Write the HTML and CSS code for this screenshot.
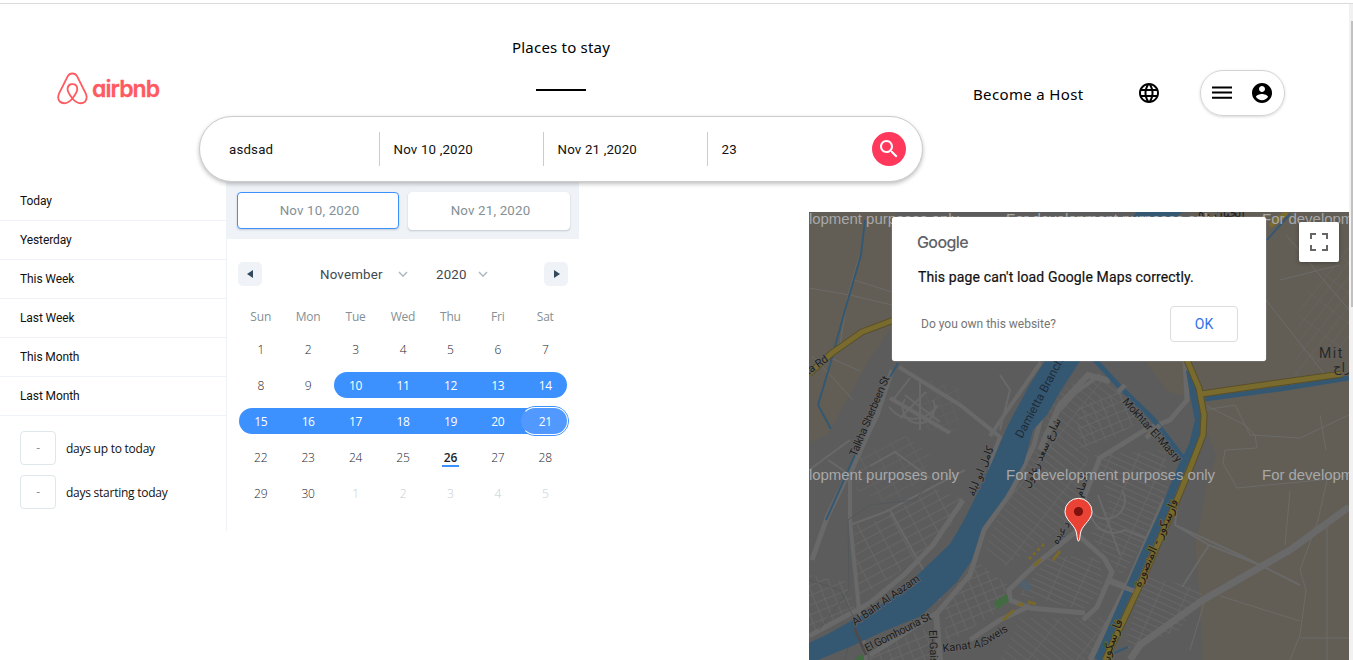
FILE: index.html
```html
<!DOCTYPE html>
<html lang="en">
<head>
<meta charset="utf-8">
<title>airbnb</title>
<link rel="stylesheet" href="styles.css">
</head>
<body>
<div class="page">
  <header class="header">
    <a class="logo">
      <svg class="belo" width="31" height="33" viewBox="0 0 32 34" fill="none" stroke="#ff5a5f" stroke-width="1.9" stroke-linejoin="round"><path d="M15.9 27.3C12.8 23.4 10.9 20.5 10.9 17.6C10.9 14.5 13 12.5 15.9 12.5S20.9 14.5 20.9 17.6C20.9 20.5 19 23.4 15.9 27.3C12.8 31 10.2 32.2 7.5 32.2C3.6 32.2 1.2 29.5 1.2 26.1C1.2 24.6 1.6 23.3 2.3 21.7L11 4.5C12.2 2.4 13.5 1.5 15.9 1.5S19.6 2.4 20.8 4.5L29.5 21.7C30.2 23.3 30.6 24.6 30.6 26.1C30.6 29.5 28.2 32.2 24.3 32.2C21.6 32.2 19 31 15.9 27.3Z"/></svg>
      <span class="wordmark">airbnb</span>
    </a>
    <div class="center">
      <div class="tab"><span class="tab-label">Places to stay</span></div>
      <div class="search">
        <div class="field place">asdsad</div>
        <div class="field date">Nov 10 ,2020</div>
        <div class="field date">Nov 21 ,2020</div>
        <div class="field guests">23</div>
        <button class="go"><svg width="24" height="24" viewBox="0 0 24 24" fill="#fff"><path d="M15.5 14h-.79l-.28-.27C15.41 12.59 16 11.11 16 9.5 16 5.91 13.09 3 9.5 3S3 5.91 3 9.5 5.91 16 9.5 16c1.61 0 3.09-.59 4.23-1.57l.27.28v.79l5 4.99L20.49 19l-4.99-5zm-6 0C7.01 14 5 11.99 5 9.5S7.01 5 9.5 5 14 7.01 14 9.5 11.99 14 9.5 14z"/></svg></button>
      </div>
    </div>
    <div class="account">
      <span class="host">Become a Host</span>
      <svg class="globe" width="24" height="24" viewBox="0 0 24 24"><path d="M11.99 2C6.47 2 2 6.48 2 12s4.47 10 9.99 10C17.52 22 22 17.52 22 12S17.52 2 11.99 2zm6.93 6h-2.95c-.32-1.25-.78-2.45-1.38-3.56 1.84.63 3.37 1.91 4.33 3.56zM12 4.04c.83 1.2 1.48 2.53 1.91 3.96h-3.82c.43-1.43 1.08-2.76 1.91-3.96zM4.26 14C4.1 13.36 4 12.69 4 12s.1-1.36.26-2h3.38c-.08.66-.14 1.32-.14 2s.06 1.34.14 2H4.26zm.82 2h2.95c.32 1.25.78 2.45 1.38 3.56-1.84-.63-3.37-1.9-4.33-3.56zm2.95-8H5.08c.96-1.66 2.49-2.93 4.33-3.56C8.81 5.55 8.35 6.75 8.03 8zM12 19.96c-.83-1.2-1.48-2.53-1.91-3.96h3.82c-.43 1.43-1.08 2.76-1.91 3.96zM14.34 14H9.66c-.09-.66-.16-1.32-.16-2s.07-1.35.16-2h4.68c.09.65.16 1.32.16 2s-.07 1.34-.16 2zm.25 5.56c.6-1.11 1.06-2.31 1.38-3.56h2.95c-.96 1.65-2.49 2.93-4.33 3.56zM16.36 14c.08-.66.14-1.32.14-2s-.06-1.34-.14-2h3.38c.16.64.26 1.31.26 2s-.1 1.36-.26 2h-3.38z"/></svg>
      <div class="menu">
        <svg width="20" height="14" viewBox="0 0 20 14"><path d="M0 .5h20v2H0zM0 5.600h20v2H0zM0 10.700h20v2H0z"/></svg>
        <svg width="24" height="24" viewBox="0 0 24 24"><path d="M12 2C6.48 2 2 6.48 2 12s4.48 10 10 10 10-4.48 10-10S17.52 2 12 2zm0 3c1.66 0 3 1.34 3 3s-1.34 3-3 3-3-1.34-3-3 1.34-3 3-3zm0 14.2c-2.5 0-4.71-1.28-6-3.22.03-1.99 4-3.08 6-3.08 1.99 0 5.97 1.09 6 3.08-1.29 1.94-3.5 3.22-6 3.22z"/></svg>
      </div>
    </div>
  </header>

  <main class="main">
    <section class="picker">
      <div class="ranges">
        <div class="range">Today</div><div class="range">Yesterday</div><div class="range">This Week</div>
        <div class="range">Last Week</div><div class="range">This Month</div><div class="range">Last Month</div>
        <div class="inputs">
          <div class="days"><span class="num">-</span><span>days up to today</span></div>
          <div class="days second"><span class="num">-</span><span>days starting today</span></div>
        </div>
      </div>
      <div class="calendar">
        <div class="display"><div class="pick active">Nov 10, 2020</div><div class="pick">Nov 21, 2020</div></div>
        <div class="months">
          <span class="arrow"><svg width="7" height="8" viewBox="0 0 7 8"><path d="M0 4L6 0v8z"/></svg></span>
          <span class="selects">
            <span class="month">November</span><svg class="chev" width="10" height="7" viewBox="0 0 10 7"><path d="M1 1l4 4.2L9 1"/></svg>
            <span class="year">2020</span><svg class="chev" width="10" height="7" viewBox="0 0 10 7"><path d="M1 1l4 4.2L9 1"/></svg>
          </span>
          <span class="arrow"><svg width="7" height="8" viewBox="0 0 7 8"><path d="M7 4L1 0v8z"/></svg></span>
        </div>
        <div class="week names"><span>Sun</span><span>Mon</span><span>Tue</span><span>Wed</span><span>Thu</span><span>Fri</span><span>Sat</span></div>
        <div class="week"><span>1</span><span>2</span><span>3</span><span>4</span><span>5</span><span>6</span><span>7</span></div>
        <div class="week"><span>8</span><span>9</span><span class="in first">10</span><span class="in">11</span><span class="in">12</span><span class="in">13</span><span class="in last">14</span></div>
        <div class="week"><span class="in first">15</span><span class="in">16</span><span class="in">17</span><span class="in">18</span><span class="in">19</span><span class="in">20</span><span class="in last end">21</span></div>
        <div class="week"><span>22</span><span>23</span><span>24</span><span>25</span><span class="today">26</span><span>27</span><span>28</span></div>
        <div class="week"><span>29</span><span>30</span><span class="off">1</span><span class="off">2</span><span class="off">3</span><span class="off">4</span><span class="off">5</span></div>
      </div>
    </section>

    <section class="map">
      <svg class="tiles" width="540" height="448" viewBox="809 212 540 448">
        <defs>
          <pattern id="blockA" width="17" height="9" patternUnits="userSpaceOnUse" patternTransform="rotate(-28)"><path d="M0 0H17M0 0V9" fill="none" stroke="#666" stroke-width="2"/></pattern>
          <pattern id="blockB" width="25" height="6" patternUnits="userSpaceOnUse" patternTransform="rotate(24)"><path d="M0 0H25M0 0V6" fill="none" stroke="#666" stroke-width="1.800"/></pattern>
          <pattern id="blockC" width="7" height="38" patternUnits="userSpaceOnUse" patternTransform="rotate(-52)"><path d="M0 0V38M0 0H7" fill="none" stroke="#666" stroke-width="1.500"/></pattern>
          <pattern id="blockD" width="10" height="9" patternUnits="userSpaceOnUse" patternTransform="rotate(-22)"><path d="M0 0H10M0 0V9" fill="none" stroke="#666" stroke-width="2"/></pattern>
          <pattern id="blockE" width="9" height="24" patternUnits="userSpaceOnUse" patternTransform="rotate(38)"><path d="M0 0V24M0 0H9" fill="none" stroke="#696969" stroke-width="1.200"/></pattern>
        </defs>
        <rect x="809" y="212" width="540" height="448" fill="#5c5c5c"/>
        <path d="M809 212H895V322L868 362L828 434L809 443ZM1190 212H1349V660H1202L1200 600L1195 545L1206 490L1216 455L1206 430L1190 370ZM1145 361H1186L1192 398L1168 392Z" fill="#625e56"/>

        <path d="M880 520L933 488L966 500L945 535L902 570L858 600L854 525Z" fill="url(#blockA)"/>
        <path d="M809 575L848 582L856 614L809 636Z" fill="url(#blockD)"/>
        <path d="M860 455L905 435L930 452L925 478L890 505L856 490Z" fill="url(#blockA)" opacity=".6"/>
        <path d="M928 380L962 388L958 432L918 430Z" fill="url(#blockD)" opacity=".4"/>
        <path d="M1050 398L1088 372L1130 385L1098 428L1060 470L1036 462Z" fill="url(#blockC)"/>
        <path d="M1030 450L1092 440L1080 500L1060 530L1002 568L984 550L1003 505Z" fill="url(#blockC)"/>
        <path d="M975 560L1008 585L1000 610L945 645L945 602Z" fill="url(#blockD)"/>
        <path d="M868 655L930 625L932 660H870Z" fill="url(#blockD)"/>
        <path d="M1095 455L1165 450L1168 490L1142 545L1122 575L1090 535L1110 505Z" fill="url(#blockB)"/>
        <path d="M1050 555L1100 558L1103 590L1083 610L1020 595Z" fill="url(#blockB)"/>
        <path d="M1000 660L1020 618L1100 618L1114 620L1095 660Z" fill="url(#blockC)"/>
        <path d="M1076 408L1120 390L1142 420L1110 440L1080 448Z" fill="url(#blockD)"/>
        <path d="M1143 575L1205 590L1180 630L1125 650Z" fill="url(#blockB)"/>
        <path d="M1300 300L1349 235V345L1295 378Z" fill="url(#blockE)" opacity=".65"/>

        <g fill="none" stroke="#696969">
          <path stroke-width="5" d="M892 370L877 415L855 460L828 515L812 560M963 500L933 545L904 575L870 603L809 636M1048 390L1034 445L1012 490L984 530L970 575L938 612L870 655"/>
          <path stroke-width="4" d="M899 367L960 405L1000 437L993 455L990 470M890 398L950 433M990 436L1013 402L1041 362M1060 410L1075 393L1100 375M870 430L850 475V520L860 620L866 660"/>
          <path stroke-width="7" d="M1349 507L1290 550L1203 600L1140 645L1130 660"/>
          <path stroke-width="5" d="M1185 361L1187 400L1170 420L1145 430L1100 458L1085 495L1078 535L1104 558L1112 572L1097 607L1083 620M1078 530L1035 565L1009 590L1010 600L1030 608L1085 613M970 640L1000 620L1030 606"/>
          <path stroke-width="6" d="M1165 500L1130 580L1090 660M936 612L940 660M1108 580L1134 590M1110 381L1088 375L1060 405L1040 450"/>
          <path stroke-width="2" d="M893 400L910 378M905 395L940 422M900 418L926 392M920 382V430M889 407A30 30 0 0 0 938 405M905 399A16 16 0 1 0 933 400M1000 375L1010 390L1000 430M870 466L895 452L930 478M850 525L885 512L965 470M890 510L940 600M828 460L850 475M809 470L850 440"/>
          <path stroke-width="2" d="M1122 490A18 18 0 1 1 1090 510A24 24 0 0 0 1125 530L1150 540M1098 495L1120 555M1178 495L1175 525L1209 545L1182 587M1175 525L1240 555L1300 585M1209 545L1260 565"/>
        </g>
        <g fill="none" stroke="#6b6b68" stroke-width="1">
          <path d="M809 288L850 295L892 305M854 280L892 292M859 257L848 295L840 345M826 356L860 371M812 356L835 380L853 400M1349 475L1320 480L1237 488L1223 463L1225 450L1257 448L1255 435L1245 425L1205 405M1290 491L1285 545M1327 480L1318 520L1300 570L1306 590L1300 635L1290 660M1327 520V660M1220 596L1300 621M1205 600L1190 650M1300 638H1349M1266 300L1325 375M1280 280L1340 265M1320 415L1326 450M1205 410L1235 405L1250 435L1300 438L1349 415M1286 235L1349 310"/>
          <path d="M819 630L849 590L848 520L870 505L915 500L930 482M845 660L855 620L840 590L809 580" stroke="#53585b"/>
        </g>

        <path fill="#355872" d="M1045 361H1080L1060 392L1047 415L1033 430L1024 463L1005 497L982 528L972 560L957 582L938 600L921 616L882 632L852 646L818 660H809V643L828 634L858 617L882 604L908 584L930 563L950 544L963 522L976 496L992 462L1008 425L1030 384ZM1137 212H1182L1172 222H1127Z"/>
        <g fill="none" stroke="#355872">
          <path stroke-width="5" d="M1095 360L1118 385L1153 419L1183 458M1205 399L1280 389L1349 378"/>
          <path stroke-width="8" d="M1190 370L1194 395L1199 420L1193 445L1181 469L1165 509L1145 553L1130 587L1098 660"/>
          <path stroke-width="2" d="M865 220L861 255L845 310L830 365L818 405L831 429M898 363L890 377M855 455L826 520M1267 240L1290 214M1114 653L1128 647"/>
        </g>
        <g fill="none" stroke="#594f2b" stroke-width="7"><path d="M809 374L832 353L862 332L894 320M1187 360L1199 388L1204 415L1203 435L1191 466L1177 500L1140 585L1105 660M1201 394L1270 384L1342 374"/></g>
        <g fill="none" stroke="#796b2d" stroke-width="5"><path d="M809 374L832 353L862 332L894 320M1187 360L1199 388L1204 415L1203 435L1191 466L1177 500L1140 585L1105 660M1201 394L1270 384L1342 374M1270 226L1287 212"/></g>
        <path fill="none" stroke="#696969" stroke-width="5" d="M1108 581L1134 591M1118 392L1125 385M1146 438L1160 425"/>
        <path fill="none" stroke="#4f4b4b" stroke-width="3" d="M854 627L866 655"/>
        <path fill="#426b42" d="M994 602L1007 594L1009 601L997 610ZM857 657L864 654V660H855Z"/>
        <path fill="#50606c" d="M1019 586L1024 579L1032 586L1028 592Z"/>
        <g fill="none" stroke="#796827" stroke-width="3"><path d="M1034 566L1041 559M1053 560L1060 551M1003 620L1014 610M1017 605L1024 604M1028 602L1036 604"/><path stroke-dasharray="3 3" d="M1029 559L1045 543"/></g>

        <g class="road">
          <text x="808" y="375" transform="rotate(-34 808 375)">ta Rd</text>
          <text x="856" y="457" transform="rotate(-67 856 457)" textLength="86">Talkha Sherbeen St</text>
          <text x="1122" y="402" transform="rotate(48 1122 402)" textLength="82">Mokhtar El-Masry</text>
          <text x="855" y="626" transform="rotate(-35 855 626)" textLength="80">Al Bahr Al Aazam</text>
          <text x="867" y="652" transform="rotate(-27 867 652)" textLength="73">El Gomhouria St</text>
          <text x="929" y="630" transform="rotate(88 929 630)">El-Gaish</text>
          <text x="943" y="652" transform="rotate(-7 943 652)">Kanat Al</text>
          <text x="984" y="646" transform="rotate(-32 984 646)">Sweis</text>
          <text class="ar" x="974" y="497" transform="rotate(-68 974 497)" textLength="53">كامل ابو ليلة</text>
          <text class="ar" x="1029" y="489" transform="rotate(-65 1029 489)" textLength="76">شارع سعد زغلول</text>
          <text class="ar" x="1057" y="545" transform="rotate(-57 1057 545)" textLength="42">محمد عبده</text>
          <text class="ar" x="1082" y="498" transform="rotate(-75 1082 498)">الامام</text>
          <text class="ar big" x="1140" y="588" transform="rotate(-66 1140 588)" textLength="95">فارسكور - المنصورة</text>
          <text class="ar big" x="1108" y="662" transform="rotate(-70 1108 662)">فارسكور</text>
          <text class="ar big plain" x="1198" y="217">الحنان رة</text>
          <text class="town" x="1319" y="358">Mit</text>
          <text class="town ar" x="1333" y="372">مزاح</text>
          <text class="water" x="1022" y="439" transform="rotate(-62 1022 439)" textLength="89">Damietta Branch</text>
        </g>
        <g class="mark">
          <text x="750" y="224" textLength="209">For development purposes only</text>
          <text x="1006" y="224" textLength="209">For development purposes only</text>
          <text x="1262" y="224" textLength="209">For development purposes only</text>
          <text x="750" y="480" textLength="209">For development purposes only</text>
          <text x="1006" y="480" textLength="209">For development purposes only</text>
          <text x="1262" y="480" textLength="209">For development purposes only</text>
        </g>
        <path fill="#ea4335" stroke="#fff" stroke-width="1" d="M1078.500 541C1077 541 1077.400 536 1076 531C1073.500 524 1065 519.500 1065 511.500A13.500 13.200 0 0 1 1092 511.500C1092 519.500 1083.500 524 1081 531C1079.600 536 1080 541 1078.500 541Z"/>
        <circle cx="1078.500" cy="511.500" r="4.600" fill="#7f120c"/>
      </svg>
      <div class="dialog">
        <div class="google">Google</div>
        <div class="message">This page can't load Google Maps correctly.</div>
        <div class="foot"><span class="own">Do you own this website?</span><button class="ok">OK</button></div>
      </div>
      <button class="full"><svg width="18" height="18" viewBox="0 0 18 18" fill="#666"><path d="M0 0v6h2V2h4V0H0zm16 0h-4v2h4v4h2V0h-2zm0 16h-4v2h6v-6h-2v4zM2 12H0v6h6v-2H2v-4z"/></svg></button>
    </section>
    <div class="scroll"><div class="thumb"></div></div>
  </main>
</div>
</body>
</html>
```

FILE: styles.css
```css
* { box-sizing: border-box; }
body { margin: 0; background: #fff; overflow: hidden; font-family: "Open Sans", "Noto Sans", sans-serif; color: #111; }
button { padding: 0; border: 0; display: flex; align-items: center; justify-content: center; }
svg { display: block; flex: none; }
.page { width: 1353px; height: 660px; padding-top: 3px; overflow: hidden; position: relative; }
.header { height: 179px; border-top: 1px solid #dadada; display: grid; grid-template-columns: 199px 724px 1fr; position: relative; z-index: 2; }

.logo { display: flex; padding: 68px 0 0 57px; height: 110px; }
.wordmark { font: 600 23px/30px Inter, sans-serif; font-feature-settings: "cv11"; letter-spacing: -0.9px; color: #ff5a5f; -webkit-text-stroke: .3px #ff5a5f; margin: 2px 0 0 4px; }

.center { display: flex; flex-direction: column; }
.tab { height: 112px; display: flex; flex-direction: column; align-items: center; padding-top: 32px; font: 400 15px/22px "Noto Sans", sans-serif; letter-spacing: .2px; color: #000; }
.tab-label { white-space: nowrap; }
.tab::after { content: ""; width: 50px; height: 2px; background: #000; margin-top: 31px; }
.search { height: 66px; border: 1px solid #ccc; border-radius: 33px; background: #fff; box-shadow: 0 2px 4px rgba(0,0,0,.25); display: flex; align-items: center; font: 13.300px/20px Roboto, sans-serif; letter-spacing: .17px; }
.field { width: 164px; height: 34px; line-height: 35px; padding-left: 13.500px; border-left: 1px solid #ccc; }
.place { width: 179px; padding-left: 29px; border-left: 0; }
.go { width: 34px; height: 34px; border-radius: 50%; background: #ff385c; margin-left: 1px; }

.account { display: flex; align-items: flex-start; padding: 66px 0 0 50px; }
.host { width: 164px; font: 400 15px/22px "Noto Sans", sans-serif; letter-spacing: .35px; color: #000; padding-top: 13px; }
.globe { margin: 11px 39px 0 0; }
.menu { width: 85px; height: 46px; border: 1px solid #d3d3d3; border-radius: 23px; box-shadow: 0 1px 3px rgba(0,0,0,.16); display: flex; align-items: center; justify-content: space-between; padding: 0 10px 0 11px; }

.main { display: flex; height: 478px; }
.picker { width: 579px; height: 349px; display: flex; margin-right: 230px; }
.ranges { width: 227px; border-right: 1px solid #eff2f7; font: 12px/38px Roboto, sans-serif; letter-spacing: -.1px; }
.range { height: 39px; padding-left: 20px; border-bottom: 1px solid #eff2f7; }
.inputs { padding: 15px 0 0 20px; font: 12px/34px "Open Sans", sans-serif; letter-spacing: -.25px; }
.days { display: flex; gap: 10px; margin-bottom: 10px; height: 34px; line-height: 36px; }
.num { width: 36px; height: 34px; border: 1px solid #dee7eb; border-radius: 4px; text-align: center; line-height: 32px; color: #849095; }
.calendar { width: 352px; }
.display { height: 57px; padding: 10px 9px 9px 10px; background: #eff2f7; display: flex; gap: 9px; }
.pick { flex: 1; height: 38px; background: #fff; border: 1px solid #fff; border-radius: 4px; box-shadow: 0 1px 2px rgba(35,57,66,.21); color: #849095; text-align: center; font: 13.300px/36px Roboto, sans-serif; letter-spacing: .18px; padding-left: 3px; }
.active { border-color: #3d91ff; height: 37px; }
.months { height: 70px; padding: 0 11px; display: flex; align-items: center; justify-content: space-between; }
.arrow { width: 24px; height: 24px; background: #eff2f7; border-radius: 5px; display: flex; align-items: center; justify-content: center; fill: #34495e; }
.selects { display: flex; align-items: center; font: 13.300px/24px Roboto, sans-serif; letter-spacing: .2px; color: #3e484f; padding: 1px 0 0 2px; }
.month { width: 78px; }
.year { width: 42px; margin-left: 28px; }
.chev { fill: none; stroke: #aeb9bf; stroke-width: 1.500; }
.week { display: grid; grid-template-columns: repeat(7, 47.430px); padding-left: 10px; height: 36px; align-items: center; text-align: center; font: 300 12px/28px "Open Sans", sans-serif; letter-spacing: -.2px; color: #1d2429; }
.names { height: 30px; margin: -7px 0 -1px; font-weight: 400; line-height: 26px; color: #849095; }
.week span { height: 26px; }
.week .in { background: #3d91ff; color: #fff; font-weight: 400; letter-spacing: -.4px; }
.week .first { border-radius: 13px 0 0 13px; margin-left: 2px; padding-right: 2px; }
.week .last { border-radius: 0 13px 13px 0; margin-right: 2px; padding-left: 2px; }
.week .end { position: relative; z-index: 0; }
.end::before, .end::after { content: ""; position: absolute; z-index: -1; inset: -2px; border-radius: 15px; border: 1px solid #3d91ff; background: #5199ff; }
.end::after { inset: -1px; border-color: #fff #fff #fff transparent; background: none; }
.today { position: relative; font-weight: 600; }
.today::after { content: ""; position: absolute; left: 15px; right: 15px; bottom: 3px; height: 2px; background: #3d91ff; }
.week .off { color: #c5ced3; }

.map { width: 540px; height: 448px; margin-top: 30px; position: relative; }
.road { font: 400 11px Roboto, sans-serif; fill: #1c1c1c; stroke: #646464; stroke-width: 1.500px; paint-order: stroke; }
.ar { font-family: "DejaVu Sans", sans-serif; font-size: 11px; }
.big { font-size: 12px; stroke: #796b2d; }
.plain { stroke: none; }
.town { font-size: 14px; letter-spacing: 1.500px; fill: #282828; stroke-width: .5px; }
.town.ar { letter-spacing: 0; font-size: 13px; }
.water { fill: #202c38; stroke: none; font-size: 12px; }
.mark { font: 15px "Liberation Sans", sans-serif; fill: #a8a8a8; }
.dialog { position: absolute; left: 83px; top: 5px; width: 374px; height: 144px; background: #fff; border-radius: 3px; padding: 15px 28px 0 26px; box-shadow: 0 0 1px #fff; font-family: Roboto, sans-serif; }
.google { font: 500 16px/20px Inter, sans-serif; letter-spacing: -.6px; color: #5f6368; margin-left: -1px; }
.message { font-weight: 400; font-size: 14px; letter-spacing: .13px; line-height: 20px; margin-top: 15px; color: #111; -webkit-text-stroke: .2px #111; white-space: nowrap; }
.foot { display: flex; justify-content: space-between; margin-top: 19px; padding-left: 3px; line-height: 36px; font-size: 12px; color: #757575; }
.ok { width: 68px; height: 36px; border: 1px solid #dadce0; border-radius: 4px; background: #fff; color: #3271e8; font: 14px Roboto, sans-serif; }
.full { position: absolute; top: 10px; right: 10px; width: 40px; height: 40px; background: #fff; border-radius: 2px; box-shadow: 0 1px 4px rgba(0,0,0,.3); }
.scroll { position: absolute; right: 0; top: 4px; width: 4px; height: 656px; background: #f1f1f1; padding: 17px 0 0 2px; }
.thumb { width: 2px; height: 286px; background: #c1c1c1; }
```
